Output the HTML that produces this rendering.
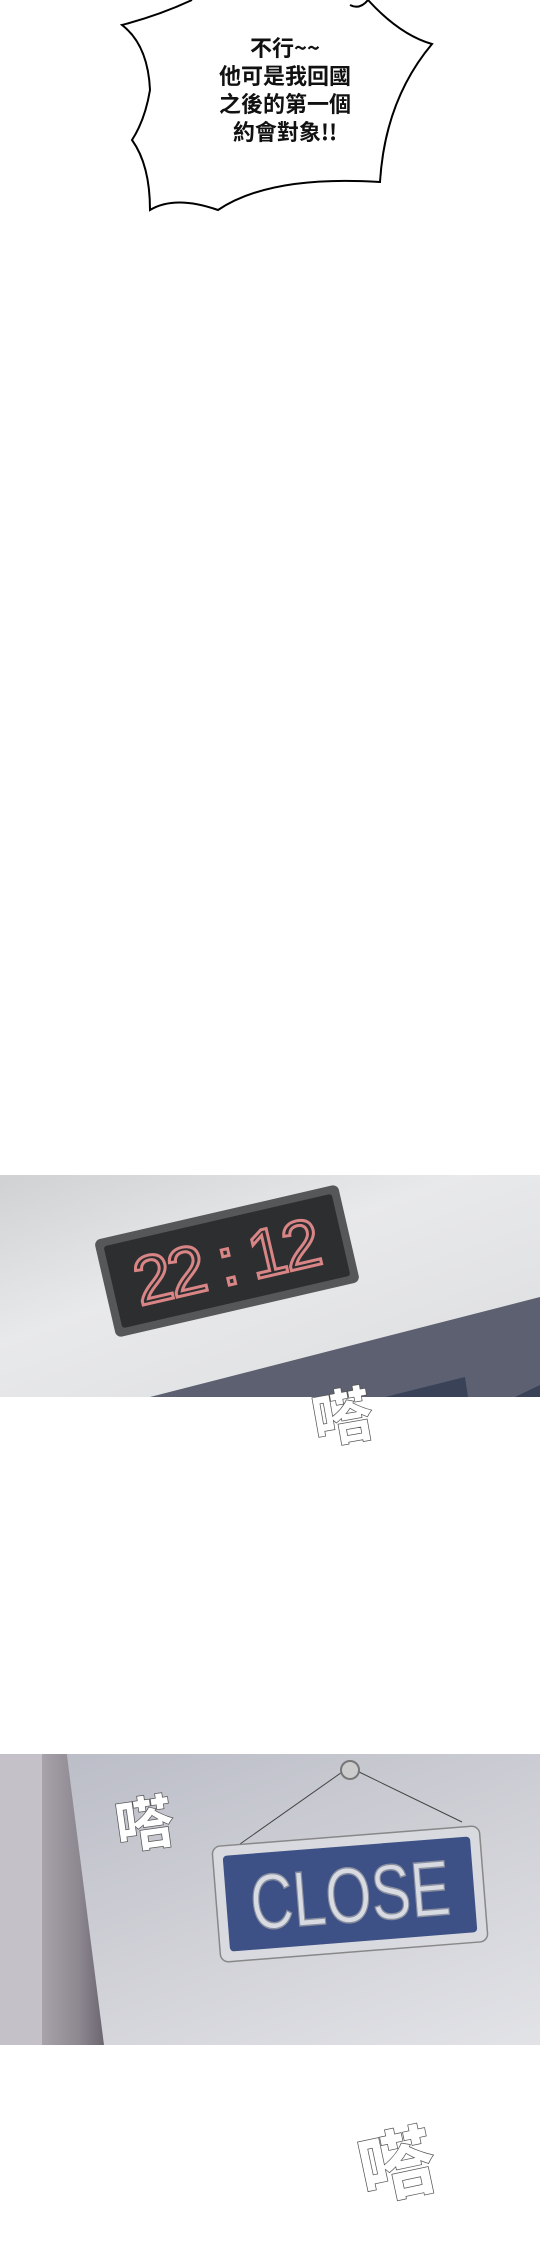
<!DOCTYPE html>
<html><head><meta charset="utf-8"><style>
body{margin:0;width:540px;height:2250px;background:#fff;position:relative;overflow:hidden;font-family:"Liberation Sans","Noto Sans CJK TC",sans-serif}
.a{position:absolute}
.onom{position:absolute;color:#fff;font-family:"Noto Sans CJK TC",sans-serif;font-weight:700;-webkit-text-stroke:1.5px #555;paint-order:stroke fill}
</style></head><body>
<svg class="a" style="left:0;top:0" width="540" height="215">
<path d="M192,0 Q160,15 122,25 Q148,45 150,90 Q145,120 132,140 Q150,165 150,210 Q175,195 218,210 Q270,175 380,182 L380,182 Q385,100 432,44 Q400,35 368,0 Q360,10 350,5" fill="#fff" stroke="#000" stroke-width="2"/>
</svg>
<div class="a" style="left:185px;top:33px;width:200px;text-align:center;font-size:22px;line-height:28px;font-weight:700;color:#111;font-family:'Noto Sans CJK TC',sans-serif">不行~~<br>他可是我回國<br>之後的第一個<br>約會對象!!</div>

<div class="a" style="left:0;top:1175px;width:540px;height:222px;background:linear-gradient(160deg,#cfd1d3,#e8e9ea 40%,#dcdde0);overflow:hidden">
<svg width="540" height="222" style="position:absolute;left:0;top:0">
<polygon points="150,222 540,122 540,222" fill="#5d6070"/>
<polygon points="385,222 465,202 468,222" fill="#3a4258"/>
<polygon points="515,222 540,210 540,222" fill="#3a4258"/>
<g transform="translate(227,86) rotate(-13)">
<rect x="-125" y="-50" width="250" height="100" rx="6" fill="#555759"/>
<rect x="-117" y="-42" width="234" height="84" rx="3" fill="#2d2e30"/>
<text x="0" y="24" text-anchor="middle" font-family="Liberation Sans,sans-serif" font-size="68" fill="none" stroke="#d98585" stroke-width="3" textLength="190" lengthAdjust="spacing">22 : 12</text>
</g>
</svg>
</div>
<div class="onom" style="left:312px;top:1370px;font-size:60px;transform:rotate(-10deg)">嗒</div>

<div class="a" style="left:0;top:1754px;width:540px;height:291px;background:linear-gradient(160deg,#b9bbc6,#cfd0d6 50%,#e2e3e7);overflow:hidden">
<div class="a" style="left:0;top:0;width:45px;height:291px;background:#c4c2c8"></div>
<div class="a" style="left:42px;top:0;width:62px;height:291px;background:linear-gradient(90deg,#a8a2ab,#8d8790 60%,#6b6670);clip-path:polygon(0 0,40% 0,100% 100%,0 100%)"></div>
<svg width="540" height="291" style="position:absolute;left:0;top:0">
<line x1="345" y1="16" x2="240" y2="90" stroke="#444" stroke-width="1"/>
<line x1="355" y1="16" x2="462" y2="68" stroke="#444" stroke-width="1"/>
<circle cx="350" cy="16" r="9" fill="#ccc" stroke="#777" stroke-width="2"/>
<g transform="translate(350,140) rotate(-4.5)">
<rect x="-134" y="-58" width="268" height="116" rx="8" fill="#d8dadf" stroke="#888" stroke-width="1.5"/>
<rect x="-124" y="-48" width="248" height="96" rx="4" fill="#3d5186"/>
<text x="0" y="28" text-anchor="middle" font-size="78" fill="#d8dbe2" stroke="#8a8fa0" stroke-width="1.5" font-family="Liberation Sans,sans-serif" textLength="200" lengthAdjust="spacingAndGlyphs">CLOSE</text>
</g>
</svg>
</div>
<div class="onom" style="left:115px;top:1778px;font-size:58px;transform:rotate(-8deg)">嗒</div>
<div class="onom" style="left:358px;top:2105px;font-size:76px;transform:rotate(-12deg)">嗒</div>
</body></html>
